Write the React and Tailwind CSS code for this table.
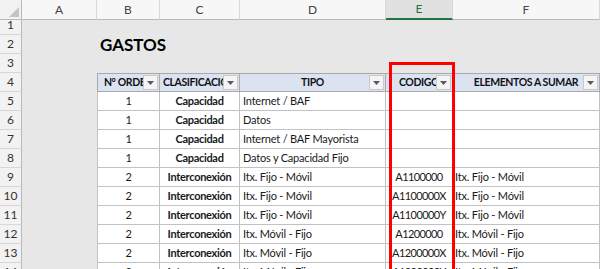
import React from "react";

const COLS = ["A", "B", "C", "D", "E", "F"];
const GRID = "grid grid-cols-[22px_75px_63px_80px_146px_67px_1fr]";

const rows = [
  ["1", "Capacidad", "Internet / BAF", "", ""],
  ["1", "Capacidad", "Datos", "", ""],
  ["1", "Capacidad", "Internet / BAF Mayorista", "", ""],
  ["1", "Capacidad", "Datos y Capacidad Fijo", "", ""],
  ["2", "Interconexión", "Itx. Fijo - Móvil", "A1100000", "Itx. Fijo - Móvil"],
  ["2", "Interconexión", "Itx. Fijo - Móvil", "A1100000X", "Itx. Fijo - Móvil"],
  ["2", "Interconexión", "Itx. Fijo - Móvil", "A1100000Y", "Itx. Fijo - Móvil"],
  ["2", "Interconexión", "Itx. Móvil - Fijo", "A1200000", "Itx. Móvil - Fijo"],
  ["2", "Interconexión", "Itx. Móvil - Fijo", "A1200000X", "Itx. Móvil - Fijo"],
  ["2", "Interconexión", "Itx. Móvil - Fijo", "A1200000Y", "Itx. Móvil - Fijo"],
];

function RowNum({ n }) {
  return (
    <div className="flex items-center justify-center bg-[#f2f2f2] border-r border-b border-r-[#b9b9b9] border-b-[#d6d6d6] text-[12px] text-[#333] tracking-normal">
      {n}
    </div>
  );
}

function FilterButton() {
  return (
    <div className="absolute right-[1px] top-[1px] bottom-[1px] w-[15px] bg-[#f4f4f4] border border-[#c9c9c9] flex items-center justify-center">
      <svg width="7" height="4" viewBox="0 0 7 4">
        <polygon points="0,0 7,0 3.5,4" fill="#5a5a5a" />
      </svg>
    </div>
  );
}

function HeadCell({ label, first }) {
  return (
    <div
      className={`relative overflow-hidden bg-[#dbe3f2] border-t border-b border-r border-[#a9a9a9] ${
        first ? "border-l" : ""
      } flex items-center justify-center text-[10.5px] font-bold tracking-[-0.4px] text-[#111] whitespace-nowrap`}
    >
      <span>{label}</span>
      <FilterButton />
    </div>
  );
}

export default function App() {
  return (
    <div className="relative w-[600px] h-[269px] overflow-hidden bg-[#e7e7e7] font-['Lato',sans-serif] text-[#1a1a1a]">
      {/* column letters */}
      <div className={`${GRID} h-[16px]`}>
        <div className="relative bg-[#f2f2f2] border-r border-b border-[#b9b9b9]">
          <svg className="absolute right-[2px] bottom-[2px]" width="10" height="10" viewBox="0 0 10 10">
            <polygon points="10,0 10,10 0,10" fill="#c4c4c4" />
          </svg>
        </div>
        {COLS.map((c) => (
          <div
            key={c}
            className={`flex items-center justify-center text-[12px] border-r border-[#d9d9d9] ${
              c === "E"
                ? "bg-[#e1e1e1] text-[#217346] border-b-2 border-b-[#217346]"
                : "bg-[#f7f7f7] text-[#444] border-b border-b-[#b9b9b9]"
            }`}
          >
            {c}
          </div>
        ))}
      </div>

      {/* rows 1-3 */}
      {[1, 2, 3].map((n) => (
        <div key={n} className={`${GRID} h-[19px]`}>
          <RowNum n={n} />
          <div />
          <div className="col-span-5 flex items-center">
            {n === 2 && (
              <span className="pl-[3px] text-[17px] font-bold text-black leading-none">GASTOS</span>
            )}
          </div>
        </div>
      ))}

      {/* table header */}
      <div className={`${GRID} h-[19px]`}>
        <RowNum n={4} />
        <div />
        <HeadCell label="N° ORDEN" first />
        <HeadCell label="CLASIFICACIÓN" />
        <HeadCell label="TIPO" />
        <HeadCell label="CODIGO" />
        <HeadCell label="ELEMENTOS A SUMAR" />
      </div>

      {/* table body */}
      {rows.map((r, i) => (
        <div key={i} className={`${GRID} h-[19px] text-[11px] tracking-[-0.2px]`}>
          <RowNum n={i + 5} />
          <div />
          <div className="flex items-center justify-center bg-white border-l border-r border-b border-[#c2c2c2]">
            {r[0]}
          </div>
          <div className="flex items-center justify-center bg-white border-r border-b border-[#c2c2c2] font-bold tracking-[-0.3px]">
            {r[1]}
          </div>
          <div className="flex items-center bg-white border-r border-b border-[#c2c2c2] pl-[3px] whitespace-nowrap">
            {r[2]}
          </div>
          <div className="flex items-center justify-center bg-white border-r border-b border-[#c2c2c2] whitespace-nowrap tracking-[-0.6px]">
            {r[3]}
          </div>
          <div className="flex items-center bg-white border-r border-b border-[#c2c2c2] pl-[2px] whitespace-nowrap">
            {r[4]}
          </div>
        </div>
      ))}

      {/* highlight around the CODIGO column */}
      <div className="absolute left-[389px] top-[62px] w-[66px] h-[240px] border-[3px] border-[#ff0000] pointer-events-none" />
    </div>
  );
}
